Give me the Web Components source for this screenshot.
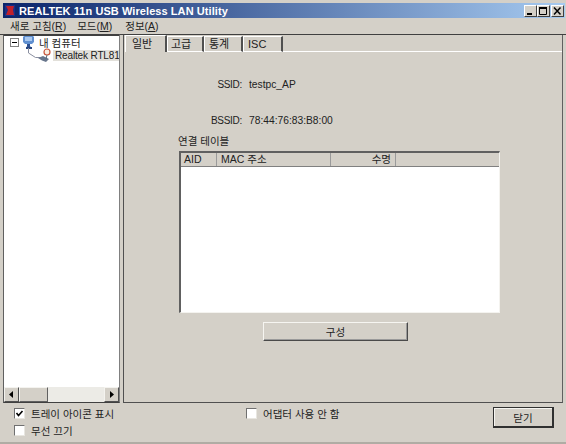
<!DOCTYPE html>
<html>
<head>
<meta charset="utf-8">
<title>REALTEK 11n USB Wireless LAN Utility</title>
<style>
  html, body { margin: 0; padding: 0; background: #d4d0c8; }
  body { font: 11px "Liberation Sans", "Noto Sans CJK KR", sans-serif; color: #222; }
</style>
</head>
<body>
<util-window></util-window>
<script>
const KR = `"Liberation Sans", "Noto Sans CJK KR", sans-serif`;

class TitleBar extends HTMLElement {
  constructor() {
    super();
    this.attachShadow({ mode: 'open' }).innerHTML = `
    <style>
      :host { display: flex; align-items: center; height: 15px; margin: 3px 1px 0 3px;
        background: linear-gradient(to right, #0a246a, #a6caf0); color: #fff; }
      .logo { width: 10px; height: 11px; margin: 0 4px 0 2px; flex: none; }
      .text { font: bold 11px "Liberation Sans", sans-serif; letter-spacing: .07px; flex: 1; white-space: nowrap; }
      .btns { display: flex; margin-right: 1px; }
      .btn { width: 13px; height: 12px; background: #d4d0c8; box-sizing: border-box;
        border: 1px solid; border-color: #fff #404040 #404040 #fff; display: flex; }
      .btn + .btn.x { margin-left: 1px; }
      svg { display: block; }
    </style>
    <svg class="logo" viewBox="0 0 10 11"><rect width="10" height="11" fill="#1b2f86"/><path d="M1 1h8l-1 4 1 5H1l2-5z" fill="#c0202a"/></svg>
    <div class="text">REALTEK 11n USB Wireless LAN Utility</div>
    <div class="btns">
      <div class="btn"><svg width="11" height="10"><rect x="2" y="7" width="5" height="2" fill="#000"/></svg></div>
      <div class="btn"><svg width="11" height="10"><path d="M1.500 1.500h7v7h-7z" fill="none" stroke="#000"/><rect x="1" y="1" width="8" height="2" fill="#000"/></svg></div>
      <div class="btn x"><svg width="11" height="10"><path d="M2 1.500l6.500 7M8.500 1.500L2 8.500" stroke="#000" stroke-width="1.500"/></svg></div>
    </div>`;
  }
}

class MenuBar extends HTMLElement {
  constructor() {
    super();
    this.attachShadow({ mode: 'open' }).innerHTML = `
    <style>
      :host { display: flex; height: 15px; margin-bottom: 1px; align-items: center; padding-left: 10px; gap: 11px;
        font: 10.5px ${KR}; color: #222; white-space: nowrap; }
      u { text-decoration: underline; }
      .last { margin-left: 2px; }
    </style>
    <span>새로 고침(<u>R</u>)</span><span>모드(<u>M</u>)</span><span class="last">정보(<u>A</u>)</span>`;
  }
}

class DeviceTree extends HTMLElement {
  constructor() {
    super();
    this.attachShadow({ mode: 'open' }).innerHTML = `
    <style>
      :host { display: flex; flex-direction: column; width: 117px; box-sizing: border-box;
        background: #fff; border: 1px solid; border-color: #404040 #808080 #404040 #606060;
        border-top-width: 2px; font: 10.5px ${KR}; color: #222; }
      .tree { flex: 1; overflow: hidden; }
      .row { display: flex; align-items: center; height: 13px; white-space: nowrap; }
      .root { padding-left: 6px; }
      .box { width: 9px; height: 9px; flex: none; margin-right: 3px; }
      .pc { width: 13px; height: 13px; flex: none; margin-right: 4px; }
      .child { padding-left: 21px; }
      .nic { width: 28px; height: 17px; flex: none; }
      .sel { background: #e2e0da; padding: 0 0 0 2px; font-size: 10px; letter-spacing: -.15px; }
      .bar { height: 15px; display: flex; background: #ecebe6; flex: none; }
      .arrow { width: 15px; height: 15px; box-sizing: border-box; background: #d4d0c8; flex: none;
        border: 1px solid; border-color: #f4f3ef #505050 #505050 #f4f3ef; display: flex; align-items: center; justify-content: center; }
      .thumb { width: 29px; box-sizing: border-box; background: #d4d0c8;
        border: 1px solid; border-color: #f4f3ef #606060 #606060 #f4f3ef; }
      .track { flex: 1; }
    </style>
    <div class="tree">
      <div class="row root">
        <svg class="box" viewBox="0 0 9 9"><rect x=".5" y=".5" width="8" height="8" fill="#fff" stroke="#808080"/><path d="M2 4.500h5" stroke="#000"/></svg>
        <svg class="pc" viewBox="0 0 13 13"><path d="M2 0h9l1 1v5l-2 2H8v2l2 2v1H4v-1l1-2V8H3L1 6V1z" fill="#5f8fd0"/><path d="M3 1h7v4H3z" fill="#a9c8ef"/><path d="M5 8h3v3H5z" fill="#2c4f8f"/><path d="M4 11h6v2H4z" fill="#27457f"/></svg>
        <span>내 컴퓨터</span>
      </div>
      <div class="row child">
        <svg class="nic" viewBox="0 0 28 17"><path d="M3.500 1v5l7 4.500h5" fill="none" stroke="#8a8fa0"/><circle cx="22" cy="5" r="3" fill="#f8eee2" stroke="#c8563c" stroke-width="1.200"/><path d="M13 11l5-2 6 3-3 3-4-1.500z" fill="#68768c"/><path d="M22 8l-1 4" stroke="#567"/></svg>
        <span class="sel">Realtek RTL81</span>
      </div>
    </div>
    <div class="bar">
      <div class="arrow"><svg width="5" height="7"><path d="M4 0v7L0 3.500z" fill="#000"/></svg></div>
      <div class="thumb"></div>
      <div class="track"></div>
      <div class="arrow"><svg width="5" height="7"><path d="M1 0v7l4-3.500z" fill="#000"/></svg></div>
    </div>`;
  }
}

class TabStrip extends HTMLElement {
  constructor() {
    super();
    this.attachShadow({ mode: 'open' }).innerHTML = `
    <style>
      :host { display: flex; height: 16px; margin-left: 1px; font: 11px ${KR}; color: #222; }
      .tab { box-sizing: border-box; height: 16px; border-top: 1px solid #fff; border-left: 1px solid #fff;
        border-right: 2px solid #505050; padding-left: 3px; white-space: nowrap; line-height: 15px;
        border-bottom: 1px solid #fff; }
      .tab.on { border-bottom: none; height: 17px; padding-left: 6px; position: relative; z-index: 1; background: #d4d0c8; margin-top: -1px; line-height: 16px; }
      .fill { flex: 1; border-bottom: 1px solid #fff; }
    </style>
    <div class="tab on" style="width:42px">일반</div>
    <div class="tab" style="width:37px">고급</div>
    <div class="tab" style="width:39px;padding-left:4px">통계</div>
    <div class="tab" style="width:40px;padding-left:4px">ISC</div>
    <div class="fill"></div>`;
  }
}

class StationTable extends HTMLElement {
  constructor() {
    super();
    this.attachShadow({ mode: 'open' }).innerHTML = `
    <style>
      :host { display: flex; flex-direction: column; width: 321px; height: 162px; box-sizing: border-box;
        background: #fff; border: 1px solid; border-color: #606060 #f4f3ef #f4f3ef #606060;
        border-top-width: 2px; border-left-width: 2px; font: 10.5px ${KR}; color: #222; }
      .head { display: grid; grid-template-columns: 36px 114px 65px 1fr; height: 13px; background: #d4d0c8;
        border-bottom: 1px solid #808080; line-height: 13px; flex: none; }
      .head div { box-sizing: border-box; border-right: 1px solid #9a9a9a; padding-left: 3px; white-space: nowrap; }
      .head .r { text-align: right; padding: 0 4px 0 0; }
      .head div:last-child { border-right: none; }
    </style>
    <div class="head"><div>AID</div><div style="padding-left:4px">MAC 주소</div><div class="r">수명</div><div></div></div>`;
  }
}

class WinButton extends HTMLElement {
  constructor() {
    super();
    this.attachShadow({ mode: 'open' }).innerHTML = `
    <style>
      :host { display: flex; align-items: center; justify-content: center; box-sizing: border-box;
        background: #d4d0c8; border: 1px solid; border-color: #f6f5f1 #4a4a4a #4a4a4a #f6f5f1;
        box-shadow: inset -1px -1px 0 #9a9a9a; font: 10.5px ${KR}; color: #222; }
      :host([default]) { border-color: #303030; border-width: 1px 2px 2px 1px;
        box-shadow: inset 1px 1px 0 #f6f5f1; }
    </style>
    <slot></slot>`;
  }
}

class WinCheck extends HTMLElement {
  constructor() {
    super();
    const on = this.hasAttribute('checked');
    this.attachShadow({ mode: 'open' }).innerHTML = `
    <style>
      :host { display: flex; align-items: center; gap: 6px; height: 16px; font: 10.5px ${KR}; color: #222; white-space: nowrap; }
      .box { width: 9px; height: 9px; background: #fff; flex: none; border: 1px solid;
        border-color: #707070 #e8e6e0 #e8e6e0 #707070; display: block; }
    </style>
    <svg class="box" viewBox="0 0 9 9">${on ? '<path d="M1.500 4l2 2.500L7.500 2" fill="none" stroke="#000" stroke-width="1.600"/>' : ''}</svg>
    <slot></slot>`;
  }
}

class InfoPage extends HTMLElement {
  constructor() {
    super();
    this.attachShadow({ mode: 'open' }).innerHTML = `
    <style>
      :host { display: flex; flex-direction: column; flex: 1; font: 10.25px ${KR}; color: #222; }
      .kv { display: grid; grid-template-columns: 118px 1fr; column-gap: 7px; height: 14px; line-height: 14px; }
      .kv .k { text-align: right; font-size: 10px; letter-spacing: -.3px; }
      .ssid { margin-top: 26px; }
      .bssid { margin-top: 22px; }
      .cap { margin: 6px 0 0 54px; height: 14px; line-height: 14px; font-size: 10.5px; }
      station-table { margin: 3px 0 0 55px; }
      win-button { width: 145px; height: 19px; margin: 9px 0 0 139px; }
    </style>
    <div class="kv ssid"><div class="k">SSID:</div><div>testpc_AP</div></div>
    <div class="kv bssid"><div class="k">BSSID:</div><div>78:44:76:83:B8:00</div></div>
    <div class="cap">연결 테이블</div>
    <station-table></station-table>
    <win-button>구성</win-button>`;
  }
}

class UtilWindow extends HTMLElement {
  constructor() {
    super();
    this.attachShadow({ mode: 'open' }).innerHTML = `
    <style>
      :host { display: flex; flex-direction: column; width: 566px; height: 444px; box-sizing: border-box;
        background: #d4d0c8; overflow: hidden; border-bottom: 2px solid #b0aca4; }
      .main { display: flex; height: 368px; padding-left: 3px; gap: 3px; border-top: 1px solid #404040; }
      .main device-tree { height: 369px; margin-top: -1px; }
      .right { width: 440px; display: flex; flex-direction: column; box-sizing: border-box;
        border: 1px solid #505050; border-top: none; border-right-color: #606060; padding-top: 1px; }
      .page { flex: 1; display: flex; flex-direction: column; }
      .foot { display: grid; grid-template-columns: 232px 1fr 61px; flex: 1; padding: 2px 12px 0 14px; }
      .col { display: flex; flex-direction: column; gap: 1px; }
      .foot win-button { width: 61px; height: 21px; margin-top: 2px; }
    </style>
    <title-bar></title-bar>
    <menu-bar></menu-bar>
    <div class="main">
      <device-tree></device-tree>
      <div class="right">
        <tab-strip></tab-strip>
        <div class="page"><info-page></info-page></div>
      </div>
    </div>
    <div class="foot">
      <div class="col">
        <win-check checked>트레이 아이콘 표시</win-check>
        <win-check>무선 끄기</win-check>
      </div>
      <div class="col"><win-check>어댑터 사용 안 함</win-check></div>
      <win-button default>닫기</win-button>
    </div>`;
  }
}

customElements.define('title-bar', TitleBar);
customElements.define('menu-bar', MenuBar);
customElements.define('device-tree', DeviceTree);
customElements.define('tab-strip', TabStrip);
customElements.define('station-table', StationTable);
customElements.define('win-button', WinButton);
customElements.define('win-check', WinCheck);
customElements.define('info-page', InfoPage);
customElements.define('util-window', UtilWindow);
</script>
</body>
</html>
